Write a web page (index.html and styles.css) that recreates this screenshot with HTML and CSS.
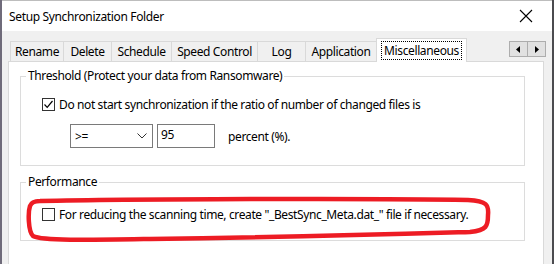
FILE: index.html
```html
<!DOCTYPE html>
<html lang="en">
<head>
    <meta charset="UTF-8">
    <title>Setup Synchronization Folder</title>
    <link rel="stylesheet" href="styles.css">
</head>
<body>

    <div class="window">
        <div class="titlebar">
            <span class="title">Setup Synchronization Folder</span>
            <svg class="close" width="14" height="14" viewBox="0 0 14 14">
                <path d="M1 1 L13 13 M13 1 L1 13" stroke="#000" stroke-width="1.1" fill="none"/>
            </svg>
        </div>

        <div class="client">
            <div class="tabrow">
                <div class="tab w-rename">Rename</div>
                <div class="tab w-delete">Delete</div>
                <div class="tab w-schedule">Schedule</div>
                <div class="tab w-speed">Speed Control</div>
                <div class="tab w-log">Log</div>
                <div class="tab w-app">Application</div>
                <div class="tab selected"><span class="focus">Miscellaneous</span></div>
                <div class="scroller">
                    <span class="arrow"><svg width="5" height="7" viewBox="0 0 5 7"><path d="M4 0 L0 3.5 L4 7 Z" fill="#000"/></svg></span>
                    <span class="arrow"><svg width="5" height="7" viewBox="0 0 5 7"><path d="M1 0 L5 3.5 L1 7 Z" fill="#000"/></svg></span>
                </div>
            </div>

            <div class="panel">
                <fieldset class="group threshold">
                    <legend>Threshold (Protect your data from Ransomware)</legend>
                    <div class="check-row">
                        <span class="checkbox">
                            <svg width="11" height="11" viewBox="0 0 11 11"><path d="M1.5 5.5 L4.2 8.3 L9.5 2" stroke="#000" stroke-width="1.2" fill="none"/></svg>
                        </span>
                        <span>Do not start synchronization if the ratio of number of changed files is</span>
                    </div>
                    <div class="ratio-row">
                        <div class="combo">
                            <span>&gt;=</span>
                            <svg width="10" height="6" viewBox="0 0 10 6"><path d="M0.5 0.5 L5 5 L9.5 0.5" stroke="#333" stroke-width="1" fill="none"/></svg>
                        </div>
                        <div class="edit">95</div>
                        <span class="unit">percent (%).</span>
                    </div>
                </fieldset>

                <fieldset class="group performance">
                    <legend>Performance</legend>
                    <div class="check-row">
                        <span class="checkbox"></span>
                        <span>For reducing the scanning time, create "_BestSync_Meta.dat_" file if necessary.</span>
                    </div>
                </fieldset>
            </div>
        </div>
    </div>

    <!-- red annotation drawn over the dialog -->
    <svg class="mark" width="554" height="264" viewBox="0 0 554 264">
        <path d="M40 201 C120 199 380 198 468 200 C487 201 489 205 488 215 C488 226 487 230 470 232 C400 234 300 237 150 239 C90 240 42 241 33 236 C28 231 28 212 30 206 C31 203 34 201 40 201 Z"
              stroke="#ed1c24" stroke-width="4.5" fill="none"/>
    </svg>

</body>
</html>
```

FILE: styles.css
```css
body {
    margin: 0;
    width: 554px;
    height: 264px;
    overflow: hidden;
    background-color: #4b4b4f;
    font-family: 'Noto Sans', 'Open Sans', sans-serif;
    font-size: 12px;
    letter-spacing: -0.38px;
    color: #000;
}
.window {
    width: 550px;
    height: 264px;
    overflow: hidden;
    border-left: 2px solid #6f6b7a;
    background-color: #f0f0f0;
}
.titlebar {
    height: 31px;
    background-color: #fff;
    border-top: 1px solid #bdbdbd;
    box-sizing: border-box;
    display: flex;
    align-items: center;
    padding-left: 7px;
    padding-right: 19px;
}
.title {
    flex: 1;
    letter-spacing: -0.35px;
}
.client {
    padding: 8px 0 0 6px;
}
.tabrow {
    display: flex;
    align-items: flex-end;
    height: 22px;
    padding-left: 2px;
    margin-right: 6px;
}
.tab {
    height: 20px;
    box-sizing: border-box;
    border: 1px solid #d9d9d9;
    border-bottom: none;
    border-right: none;
    text-align: center;
    line-height: 20px;
    white-space: nowrap;
}
.w-rename { width: 53px; }
.w-delete { width: 48px; }
.w-schedule { width: 60px; }
.w-speed { width: 86px; }
.w-log { width: 48px; }
.w-app { width: 72px; border-right: 1px solid #d9d9d9; margin-right: -1px; }
.tab.selected {
    position: relative;
    z-index: 1;
    width: 91px;
    height: 24px;
    margin-bottom: -1px;
    border-right: 1px solid #d9d9d9;
    background-color: #fff;
    padding-top: 2px;
    line-height: 17px;
}
.focus {
    display: inline-block;
    padding: 0 2px;
    border: 1px dotted #000;
    line-height: 17px;
}
.scroller {
    display: flex;
    margin-left: auto;
    align-self: center;
    margin-top: -2px;
}
.arrow {
    width: 17px;
    height: 14px;
    border: 1px solid #adadad;
    background-color: #e1e1e1;
    display: flex;
    align-items: center;
    justify-content: center;
}
.arrow + .arrow {
    border-left: none;
}
.panel {
    width: 536px;
    height: 203px;
    box-sizing: border-box;
    background-color: #fff;
    border: 1px solid #d9d9d9;
    border-bottom: none;
    padding: 6px 0 0 11px;
}
.group {
    width: 505px;
    box-sizing: border-box;
    margin: 0;
    border: 1px solid #dcdcdc;
    padding: 0 0 0 5px;
}
.group legend {
    padding: 0 2px;
    line-height: 16px;
}
.threshold {
    height: 98px;
}
.performance {
    height: 67px;
    margin-top: 8px;
}
.check-row {
    display: flex;
    align-items: center;
    gap: 4px;
    margin-left: 16px;
    height: 16px;
}
.threshold .check-row {
    margin-top: 12px;
}
.performance .check-row {
    margin-top: 16px;
}
.checkbox {
    width: 13px;
    height: 13px;
    box-sizing: border-box;
    border: 1px solid #333;
    background-color: #fff;
    display: flex;
    align-items: center;
    justify-content: center;
}
.ratio-row {
    display: flex;
    align-items: center;
    margin: 12px 0 0 44px;
}
.combo {
    width: 83px;
    height: 24px;
    box-sizing: border-box;
    border: 1px solid #7a7a7a;
    display: flex;
    align-items: center;
    justify-content: space-between;
    padding: 0 5px 0 4px;
}
.edit {
    width: 58px;
    height: 24px;
    box-sizing: border-box;
    border: 1px solid #7a7a7a;
    margin-left: 4px;
    padding: 2px 0 0 3px;
    line-height: 16px;
}
.unit {
    margin-left: 13px;
}
.mark {
    position: absolute;
    left: 0;
    top: 0;
    pointer-events: none;
}
```
